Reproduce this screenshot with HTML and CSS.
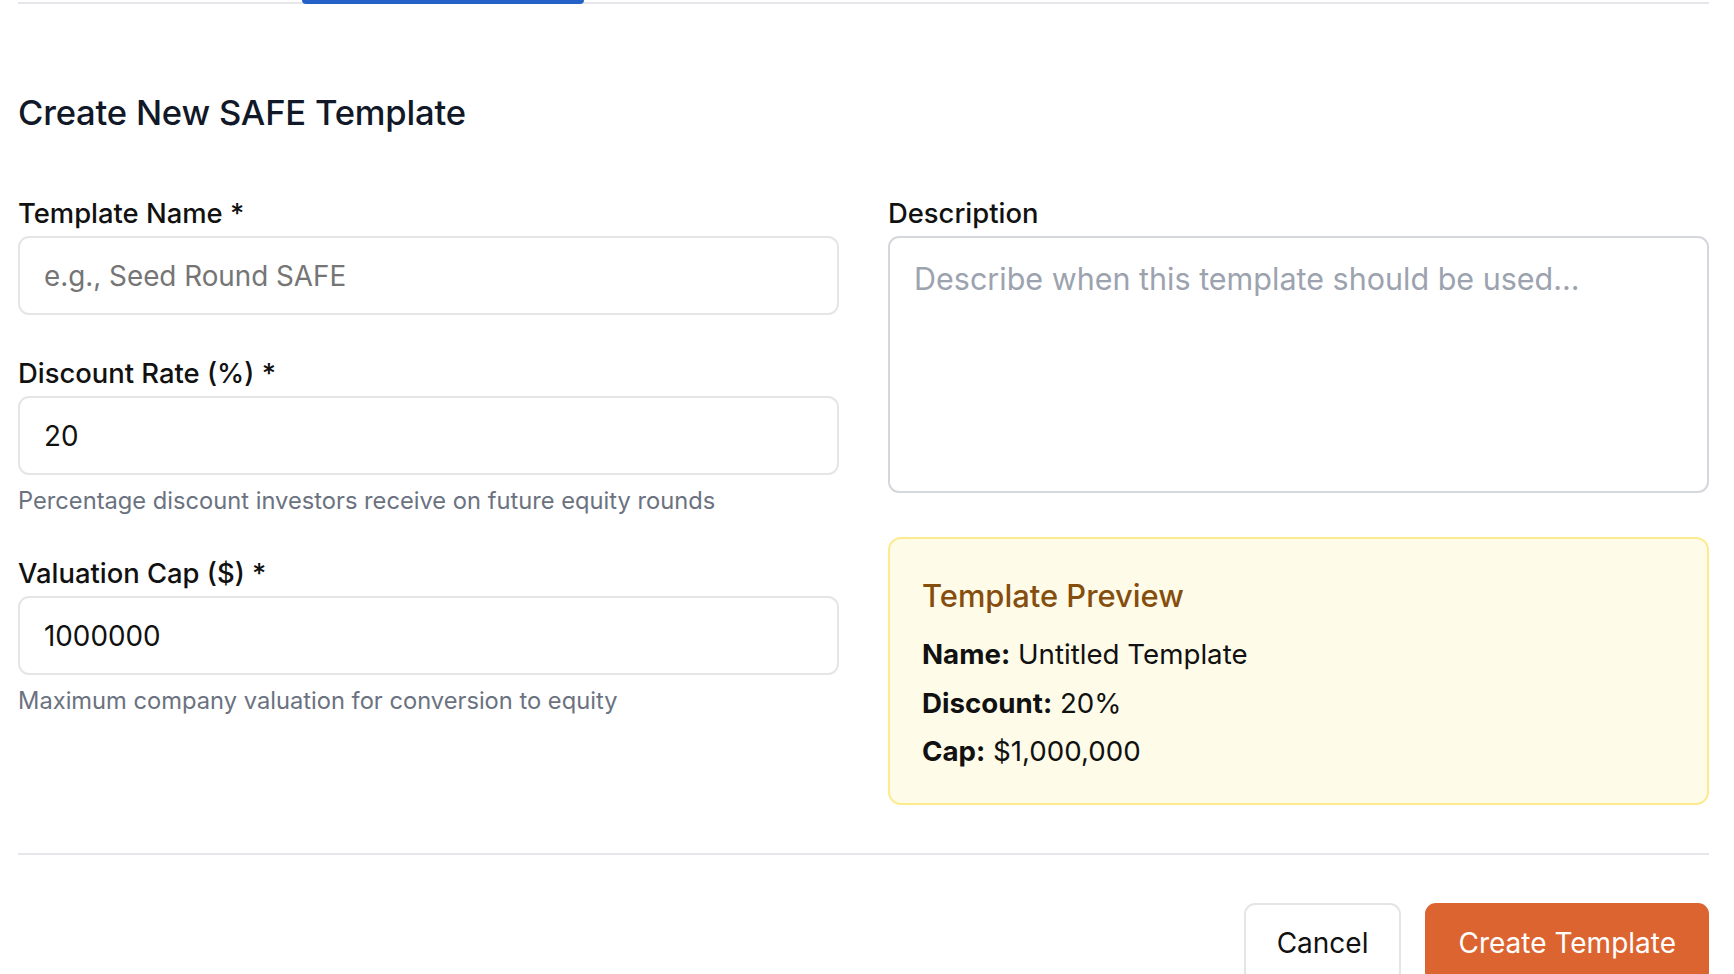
FILE: index.html
```html
<!DOCTYPE html>
<html lang="en">
<head>
<meta charset="utf-8">
<title>Create New SAFE Template</title>
<link rel="stylesheet" href="styles.css">
</head>
<body>
<div class="page">
  <nav class="tabs">
    <div class="tab tab-first"></div>
    <div class="tab tab-active"></div>
  </nav>

  <h1 class="title">Create New SAFE Template</h1>

  <form class="form">
    <div class="col">
      <div class="field">
        <label class="label" for="name">Template Name *</label>
        <input class="input" id="name" type="text" placeholder="e.g., Seed Round SAFE">
      </div>
      <div class="field field-help">
        <label class="label" for="discount">Discount Rate (%) *</label>
        <input class="input" id="discount" type="text" value="20">
        <p class="help">Percentage discount investors receive on future equity rounds</p>
      </div>
      <div class="field field-help">
        <label class="label" for="cap">Valuation Cap ($) *</label>
        <input class="input" id="cap" type="text" value="1000000">
        <p class="help">Maximum company valuation for conversion to equity</p>
      </div>
    </div>
    <div class="col">
      <div class="field field-desc">
        <label class="label" for="desc">Description</label>
        <textarea class="textarea" id="desc" placeholder="Describe when this template should be used..."></textarea>
      </div>
      <div class="preview">
        <h3 class="preview-title">Template Preview</h3>
        <p class="preview-row"><strong>Name:</strong> Untitled Template</p>
        <p class="preview-row"><strong>Discount:</strong> 20%</p>
        <p class="preview-row"><strong>Cap:</strong> $1,000,000</p>
      </div>
    </div>
  </form>

  <div class="actions">
    <button class="btn btn-secondary" type="button">Cancel</button>
    <button class="btn btn-primary" type="button">Create Template</button>
  </div>
</div>
</body>
</html>
```

FILE: styles.css
```css
* { box-sizing: border-box; }

html, body {
  margin: 0;
  padding: 0;
  background: #ffffff;
  font-family: Inter, "Noto Sans", "Liberation Sans", sans-serif;
  color: #111111;
  overflow: hidden;
}

.page {
  padding: 0 25px 0 18px;
}

.tabs {
  display: flex;
  height: 4px;
  border-bottom: 2px solid #e5e7eb;
}

.tab-first { width: 284px; }

.tab-active {
  width: 282px;
  height: 4px;
  background: #2461c8;
  border-radius: 0 0 4px 4px;
}

.title {
  margin: 87px 0 0;
  font-size: 34.6px;
  line-height: 42px;
  font-weight: 500;
  color: #111827;
  letter-spacing: -0.2px;
}

.form {
  display: grid;
  grid-template-columns: 1fr 1fr;
  column-gap: 49px;
  margin-top: 63px;
}

.col {
  display: flex;
  flex-direction: column;
}

.field {
  display: flex;
  flex-direction: column;
  margin-bottom: 41px;
}

.field-help {
  margin-bottom: 40px;
}

.field-desc {
  margin-bottom: 41px;
}

.label {
  font-size: 27.4px;
  line-height: 34px;
  font-weight: 500;
  color: #111111;
  margin-bottom: 6px;
}

.input,
.textarea {
  font-family: inherit;
  font-size: 27.8px;
  color: #111111;
  border: 2px solid #e5e5e5;
  border-radius: 11px;
  background: #ffffff;
  padding: 0 24px;
  outline: none;
}

.input {
  height: 79px;
}

.input::placeholder {
  color: #757575;
}

.textarea {
  height: 257px;
  resize: none;
  padding: 21px 24px;
  font-size: 30.5px;
  border-color: #d4d7dc;
  line-height: 40px;
}

.textarea::placeholder {
  color: #9ca3af;
}

.help {
  margin: 11px 0 0;
  font-size: 23.7px;
  line-height: 30px;
  color: #6b7280;
}

.preview {
  margin-top: 3px;
  background: #fefce8;
  border: 2px solid #fdea8c;
  border-radius: 13px;
  padding: 37px 32px 27px;
}

.preview-title {
  margin: 0 0 14px;
  font-size: 30.9px;
  line-height: 40px;
  font-weight: 500;
  color: #854d0e;
}

.preview-row {
  margin: 0;
  font-size: 27.7px;
  line-height: 48.5px;
  color: #111111;
}

.preview-row strong {
  font-weight: 700;
}

.actions {
  border-top: 2px solid #e5e7eb;
  margin-top: 48px;
  padding-top: 48px;
  display: flex;
  justify-content: flex-end;
  gap: 24px;
}

.btn {
  font-family: inherit;
  font-size: 28px;
  height: 80px;
  padding: 0 31px;
  border-radius: 11px;
  cursor: pointer;
}

.btn-secondary {
  background: #ffffff;
  color: #111111;
  border: 2px solid #e5e5e5;
}

.btn-primary {
  background: #dc6430;
  color: #ffffff;
  border: 2px solid #dc6430;
}
```
